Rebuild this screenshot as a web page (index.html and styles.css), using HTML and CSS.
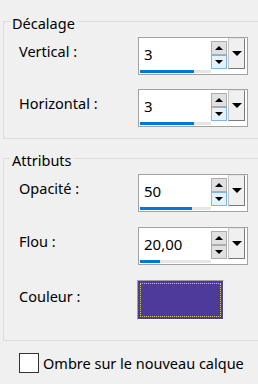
FILE: index.html
```
<!DOCTYPE html>
<html lang="fr">
<head>
    <meta charset="UTF-8">
    <meta name="viewport" content="width=device-width, initial-scale=1.0">
    <title>Ombre portée</title>
    <link rel="stylesheet" href="styles.css">
</head>
<body>
    <div class="panel">
        <fieldset class="group group-offset">
            <legend>Décalage</legend>
            <div class="row">
                <span class="label">Vertical :</span>
                <div class="spin">
                    <div class="spin-field">
                        <span class="spin-value">3</span>
                        <div class="spin-track"><div class="spin-fill" style="width: 54px"></div></div>
                    </div>
                    <div class="spin-arrows">
                        <span class="arrow up"></span>
                        <span class="arrow down hot"></span>
                    </div>
                    <span class="spin-drop"></span>
                </div>
            </div>
            <div class="row">
                <span class="label">Horizontal :</span>
                <div class="spin">
                    <div class="spin-field">
                        <span class="spin-value">3</span>
                        <div class="spin-track"><div class="spin-fill" style="width: 54px"></div></div>
                    </div>
                    <div class="spin-arrows">
                        <span class="arrow up"></span>
                        <span class="arrow down hot"></span>
                    </div>
                    <span class="spin-drop"></span>
                </div>
            </div>
        </fieldset>

        <fieldset class="group group-attr">
            <legend>Attributs</legend>
            <div class="row">
                <span class="label">Opacité :</span>
                <div class="spin">
                    <div class="spin-field">
                        <span class="spin-value">50</span>
                        <div class="spin-track"><div class="spin-fill" style="width: 52px"></div></div>
                    </div>
                    <div class="spin-arrows">
                        <span class="arrow up"></span>
                        <span class="arrow down hot"></span>
                    </div>
                    <span class="spin-drop"></span>
                </div>
            </div>
            <div class="row">
                <span class="label">Flou :</span>
                <div class="spin">
                    <div class="spin-field">
                        <span class="spin-value">20,00</span>
                        <div class="spin-track"><div class="spin-fill" style="width: 20px"></div></div>
                    </div>
                    <div class="spin-arrows">
                        <span class="arrow up"></span>
                        <span class="arrow down"></span>
                    </div>
                    <span class="spin-drop"></span>
                </div>
            </div>
            <div class="row">
                <span class="label label-colour">Couleur :</span>
                <span class="swatch"></span>
            </div>
        </fieldset>

        <label class="check">
            <span class="check-box"></span>
            <span>Ombre sur le nouveau calque</span>
        </label>
    </div>
</body>
</html>
```
FILE: styles.css
```
body {
    margin: 0;
    background-color: #f0f0f0;
    font-family: "Noto Sans", "Liberation Sans", sans-serif;
    font-size: 14.5px;
    line-height: 20px;
    color: #000;
    overflow: hidden;
}

.panel {
    padding-top: 10px;
    overflow: hidden;
}

/* group boxes run off the right edge, like the dialog they come from */
.group {
    margin: 0 0 0 3px;
    width: 257px;
    border: 1px solid #dcdcdc;
    border-right: 0;
    padding: 4px 0 11px 0;
    display: flex;
    flex-direction: column;
    gap: 14px;
}

.group legend {
    margin-left: 6px;
    padding: 3px 2px 0;
    line-height: 20px;
}

.group-attr {
    margin-top: 8px;
    gap: 15px;
    padding-bottom: 20px;
}

.row {
    display: flex;
    padding-left: 15px;
}

.label {
    flex: 0 0 119px;
    padding-top: 4px;
}

.label-colour {
    padding-top: 6px;
}

.spin {
    display: flex;
    width: 110px;
    height: 38px;
    box-sizing: border-box;
    border: 1px solid #a2a2a2;
    background-color: #fff;
}

.spin-field {
    width: 72px;
    display: flex;
    flex-direction: column;
}

.spin-value {
    flex: 1;
    padding: 6px 0 0 5px;
    font-size: 15px;
}

.spin-track {
    height: 3px;
    margin: 0 0 1px 1px;
    background-color: #e6e6e6;
}

.spin-fill {
    height: 100%;
    background-color: #0078d7;
}

.spin-arrows {
    width: 16px;
    margin-top: 3px;
    display: flex;
    flex-direction: column;
}

.arrow {
    height: 14px;
    box-sizing: border-box;
    border: 1px solid #adadad;
    background-color: #e1e1e1;
    display: flex;
    align-items: center;
    justify-content: center;
}

.arrow.hot {
    border-color: #7eb4ea;
    background-color: #e5f1fb;
}

.arrow::after {
    content: "";
    border-left: 4px solid transparent;
    border-right: 4px solid transparent;
}

.arrow.up::after {
    border-bottom: 4px solid #000;
}

.arrow.down::after {
    border-top: 4px solid #000;
}

.spin-drop {
    width: 17px;
    height: 31px;
    margin-left: 1px;
    box-sizing: border-box;
    border: 1px solid;
    border-color: #e3e3e3 #7a7a7a #7a7a7a #c4c4c4;
    background-color: #f0f0f0;
    display: flex;
    align-items: center;
    justify-content: center;
}

.spin-drop::after {
    content: "";
    border-left: 5px solid transparent;
    border-right: 5px solid transparent;
    border-top: 5px solid #000;
}

.swatch {
    width: 87px;
    height: 40px;
    margin-left: -1px;
    box-sizing: border-box;
    background-color: #4e3a9b;
    border: 1px solid;
    border-color: #a0a0a0 #fff #fff #a0a0a0;
    outline: 1px dotted #d6cd6c;
    outline-offset: -4px;
}

.check {
    display: flex;
    align-items: center;
    gap: 4px;
    margin: 12px 0 0 19px;
}

.check-box {
    width: 20px;
    height: 20px;
    box-sizing: border-box;
    border: 1px solid #333;
    background-color: #fff;
}
```
